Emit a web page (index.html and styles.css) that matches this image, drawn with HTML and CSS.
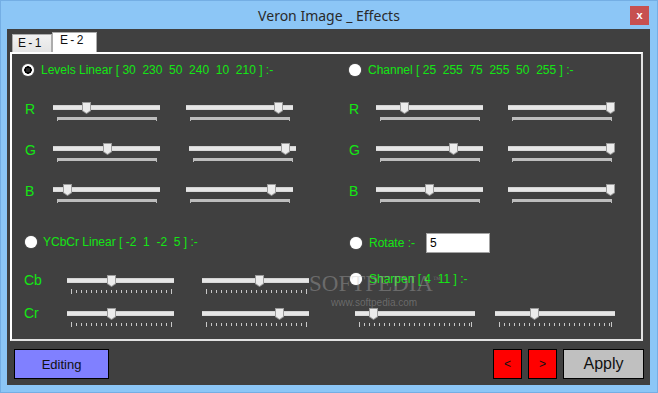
FILE: index.html
```html
<!DOCTYPE html>
<html lang="en">
<head>
  <meta charset="UTF-8" />
  <title>Veron Image _ Effects</title>
  <link rel="stylesheet" href="styles.css">
</head>
<body>
  <div class="window">

    <!-- Title bar -->
    <header class="titlebar">
      <span class="title">Veron Image _ Effects</span>
      <button class="close-btn">x</button>
    </header>

    <div class="client">
      <div class="tabs">
        <span class="tab">E - 1</span>
        <span class="tab active">E - 2</span>
      </div>

      <div class="tab-page">

        <!-- Left column -->
        <div class="col">
          <div class="opt levels">
            <span class="radio checked"></span>
            <span class="opt-text">Levels Linear [ 30  230  50  240  10  210 ] :-</span>
          </div>
          <div class="rows rgb-left">
            <div class="row">
              <span class="ch">R</span>
              <div class="slider"><div class="track"></div><div class="ticks dense"></div><span class="thumb" style="left:29px"></span></div>
              <div class="slider"><div class="track"></div><div class="ticks dense"></div><span class="thumb" style="left:88px"></span></div>
            </div>
            <div class="row shifted">
              <span class="ch">G</span>
              <div class="slider"><div class="track"></div><div class="ticks dense"></div><span class="thumb" style="left:50px"></span></div>
              <div class="slider"><div class="track"></div><div class="ticks dense"></div><span class="thumb" style="left:92px"></span></div>
            </div>
            <div class="row">
              <span class="ch">B</span>
              <div class="slider"><div class="track"></div><div class="ticks dense"></div><span class="thumb" style="left:10px"></span></div>
              <div class="slider"><div class="track"></div><div class="ticks dense"></div><span class="thumb" style="left:81px"></span></div>
            </div>
          </div>

          <div class="opt ycc">
            <span class="radio"></span>
            <span class="opt-text">YCbCr Linear [ -2  1  -2  5 ] :-</span>
          </div>
          <div class="rows ycc-rows">
            <div class="row">
              <span class="ch small">Cb</span>
              <div class="slider"><div class="track"></div><div class="ticks marks"></div><span class="thumb" style="left:40px"></span></div>
              <div class="slider"><div class="track"></div><div class="ticks marks"></div><span class="thumb" style="left:53px"></span></div>
            </div>
            <div class="row">
              <span class="ch small">Cr</span>
              <div class="slider"><div class="track"></div><div class="ticks marks"></div><span class="thumb" style="left:40px"></span></div>
              <div class="slider"><div class="track"></div><div class="ticks marks"></div><span class="thumb" style="left:73px"></span></div>
            </div>
          </div>
        </div>

        <!-- Right column -->
        <div class="col">
          <div class="opt channel">
            <span class="radio"></span>
            <span class="opt-text">Channel [ 25  255  75  255  50  255 ] :-</span>
          </div>
          <div class="rows rgb-right">
            <div class="row">
              <span class="ch">R</span>
              <div class="slider"><div class="track"></div><div class="ticks dense"></div><span class="thumb" style="left:24px"></span></div>
              <div class="slider"><div class="track"></div><div class="ticks dense"></div><span class="thumb" style="left:98px"></span></div>
            </div>
            <div class="row">
              <span class="ch">G</span>
              <div class="slider"><div class="track"></div><div class="ticks dense"></div><span class="thumb" style="left:73px"></span></div>
              <div class="slider"><div class="track"></div><div class="ticks dense"></div><span class="thumb" style="left:98px"></span></div>
            </div>
            <div class="row">
              <span class="ch">B</span>
              <div class="slider"><div class="track"></div><div class="ticks dense"></div><span class="thumb" style="left:49px"></span></div>
              <div class="slider"><div class="track"></div><div class="ticks dense"></div><span class="thumb" style="left:98px"></span></div>
            </div>
          </div>

          <div class="opt rotate">
            <span class="radio"></span>
            <span class="opt-text">Rotate :-</span>
            <input class="num-input" type="text" value="5">
          </div>

          <div class="opt sharpen">
            <span class="radio"></span>
            <span class="opt-text">Sharpen [ 4  11 ] :-</span>
          </div>
          <div class="sharpen-row">
            <div class="slider wide"><div class="track"></div><div class="ticks marks"></div><span class="thumb" style="left:14px"></span></div>
            <div class="slider wide"><div class="track"></div><div class="ticks marks"></div><span class="thumb" style="left:35px"></span></div>
          </div>
        </div>

      </div>

      <div class="actions">
        <button class="btn editing">Editing</button>
        <button class="btn arrow">&lt;</button>
        <button class="btn arrow">&gt;</button>
        <button class="btn apply">Apply</button>
      </div>
    </div>

    <!-- watermark -->
    <div class="watermark">
      <span class="wm-big">SOFTPEDIA<sup>™</sup></span>
      <span class="wm-url">www.softpedia.com</span>
    </div>
  </div>
</body>
</html>
```

FILE: styles.css
```css
/* === GLOBAL === */
* {
  box-sizing: border-box;
  margin: 0;
  padding: 0;
}

body {
  width: 658px;
  height: 393px;
  overflow: hidden;
  font-family: "Liberation Sans", Arial, sans-serif;
}

button {
  font-family: "Liberation Sans", Arial, sans-serif;
  cursor: pointer;
}

.window {
  position: relative;
  width: 658px;
  height: 393px;
  background: #8cc6f6;
  border: 1px solid #74aee4;
  display: flex;
  flex-direction: column;
}

/* === TITLE BAR === */
.titlebar {
  height: 28px;
  display: grid;
  grid-template-columns: 1fr auto 1fr;
  align-items: center;
}

.title {
  grid-column: 2;
  font-family: "Noto Sans", sans-serif;
  font-size: 14px;
  color: #2a2a2a;
}

.close-btn {
  grid-column: 3;
  justify-self: end;
  margin-right: 8px;
  width: 19px;
  height: 19px;
  border: none;
  background: #c75050;
  color: #fff;
  font-size: 11px;
  font-weight: bold;
  line-height: 17px;
}

/* === CLIENT AREA === */
.client {
  flex: 1;
  margin: 0 7px 7px 6px;
  background: #404040;
  padding: 3px 7px 6px 3px;
  display: flex;
  flex-direction: column;
}

.tabs {
  display: flex;
  align-items: flex-end;
  height: 20px;
  padding-left: 2px;
}

.tab {
  width: 40px;
  height: 18px;
  border: 1px solid #acacac;
  border-bottom: none;
  background: linear-gradient(#f2f2f2, #e4e4e4);
  font-size: 12px;
  line-height: 17px;
  padding-left: 5px;
  color: #111;
  word-spacing: -1px;
}

.tab.active {
  width: 45px;
  height: 20px;
  background: #fff;
  padding-left: 7px;
  line-height: 15px;
}

.tab-page {
  height: 289px;
  border: 2px solid;
  border-color: #fff #e2e2e2 #e2e2e2 #fff;
  display: grid;
  grid-template-columns: 327px 1fr;
  padding: 8px 0 0 8px;
}

.col {
  display: flex;
  flex-direction: column;
}

/* === OPTIONS === */
.opt {
  display: flex;
  align-items: center;
  gap: 7px;
  height: 16px;
  color: #14e614;
  font-size: 12px;
  white-space: pre;
}

.radio {
  flex: none;
  width: 12px;
  height: 12px;
  border-radius: 50%;
  background: #fff;
  box-shadow: 0 0 1px #ddd;
}

.radio.checked {
  background: radial-gradient(circle, #2a2a2a 0 2px, #000 2.5px 3.5px, #fff 4px);
}

.levels, .channel {
  margin-left: 2px;
}

.ycc {
  margin-top: 30px;
  margin-left: 5px;
  gap: 6px;
}

.rotate {
  margin-top: 29px;
  margin-left: 3px;
  height: 20px;
}

.sharpen {
  margin-top: 18px;
  margin-left: 3px;
}

.num-input {
  width: 64px;
  height: 20px;
  margin-left: 4px;
  border: 1px solid #a3a3a3;
  background: #fff;
  font-family: "Liberation Sans", Arial, sans-serif;
  font-size: 12px;
  padding-left: 3px;
  color: #000;
}

/* === SLIDER ROWS === */
.rows {
  display: flex;
  flex-direction: column;
  gap: 21px;
  margin-top: 24px;
}

.row {
  display: grid;
  align-items: start;
}

.row .slider:last-child {
  margin-left: var(--gap);
}

.rgb-left .row {
  grid-template-columns: 28px 107px auto;
  padding-left: 5px;
  --gap: 26px;
}

.rgb-left .row.shifted {
  --gap: 29px;
}

.rgb-right .row {
  grid-template-columns: 27px 107px auto;
  padding-left: 2px;
  --gap: 25px;
}

.ycc-rows {
  margin-top: 25px;
  gap: 13px;
}

.ycc-rows .row {
  grid-template-columns: 43px 107px auto;
  padding-left: 4px;
  --gap: 28px;
}

.ch {
  color: #14e614;
  font-size: 14px;
  line-height: 14px;
}

.ch.small {
  line-height: 11px;
}

.sharpen-row {
  display: flex;
  gap: 20px;
  margin-top: 21px;
  padding-left: 8px;
}

/* === SLIDER === */
.slider {
  position: relative;
  width: 107px;
  height: 20px;
  display: flex;
  flex-direction: column;
}

.slider.wide {
  width: 120px;
}

.track {
  margin-top: 3px;
  height: 5px;
  background: #e6e6e6;
  box-shadow: inset 0 1px 0 #d2d2d2, inset 0 -1px 0 #d9d9d9;
}

.ticks.dense {
  margin: 7px 3px 0 4px;
  height: 4px;
  background: linear-gradient(#bdbdbd, #bdbdbd) top / 100% 3px no-repeat;
  border-left: 1px solid #bdbdbd;
  border-right: 1px solid #bdbdbd;
}

.ticks.marks {
  margin: 6px 0 0 4px;
  width: 101px;
  height: 5px;
  background:
    linear-gradient(#c8c8c8, #c8c8c8) left / 1px 100% no-repeat,
    linear-gradient(#c8c8c8, #c8c8c8) right / 1px 100% no-repeat,
    repeating-linear-gradient(90deg, #c8c8c8 0 1px, transparent 1px 5px) 0 1px / 100% 3px no-repeat;
}

.slider.wide .ticks.marks {
  width: 113px;
}

.thumb {
  position: absolute;
  top: 0;
  width: 9px;
  height: 12px;
  background: #9c9c9c;
  clip-path: polygon(0 0, 100% 0, 100% 75%, 50% 100%, 0 75%);
}

.thumb::before {
  content: "";
  position: absolute;
  inset: 1px;
  background: #ececec;
  clip-path: polygon(0 0, 100% 0, 100% 75%, 50% 100%, 0 75%);
}

/* === BOTTOM BUTTONS === */
.actions {
  display: flex;
  gap: 6px;
  height: 30px;
  margin-top: 8px;
  margin-right: -1px;
  padding-left: 4px;
}

.btn {
  height: 30px;
  border: 1px solid #000;
  color: #111;
}

.editing {
  width: 95px;
  margin-right: auto;
  background: #8080ff;
  font-size: 13px;
}

.arrow {
  width: 29px;
  background: #ff0000;
  font-size: 12px;
}

.apply {
  width: 81px;
  background: #c0c0c0;
  font-size: 16px;
}

/* === WATERMARK === */
.watermark {
  position: absolute;
  left: 308px;
  top: 266px;
  display: flex;
  flex-direction: column;
  pointer-events: none;
}

.wm-big {
  font-family: "Liberation Serif", serif;
  font-size: 23px;
  color: rgba(190, 190, 190, 0.35);
  line-height: 26px;
}

.wm-big sup {
  font-size: 8px;
}

.wm-url {
  margin-left: 22px;
  font-family: "Liberation Sans", sans-serif;
  font-size: 10px;
  color: rgba(190, 190, 190, 0.35);
}
```
